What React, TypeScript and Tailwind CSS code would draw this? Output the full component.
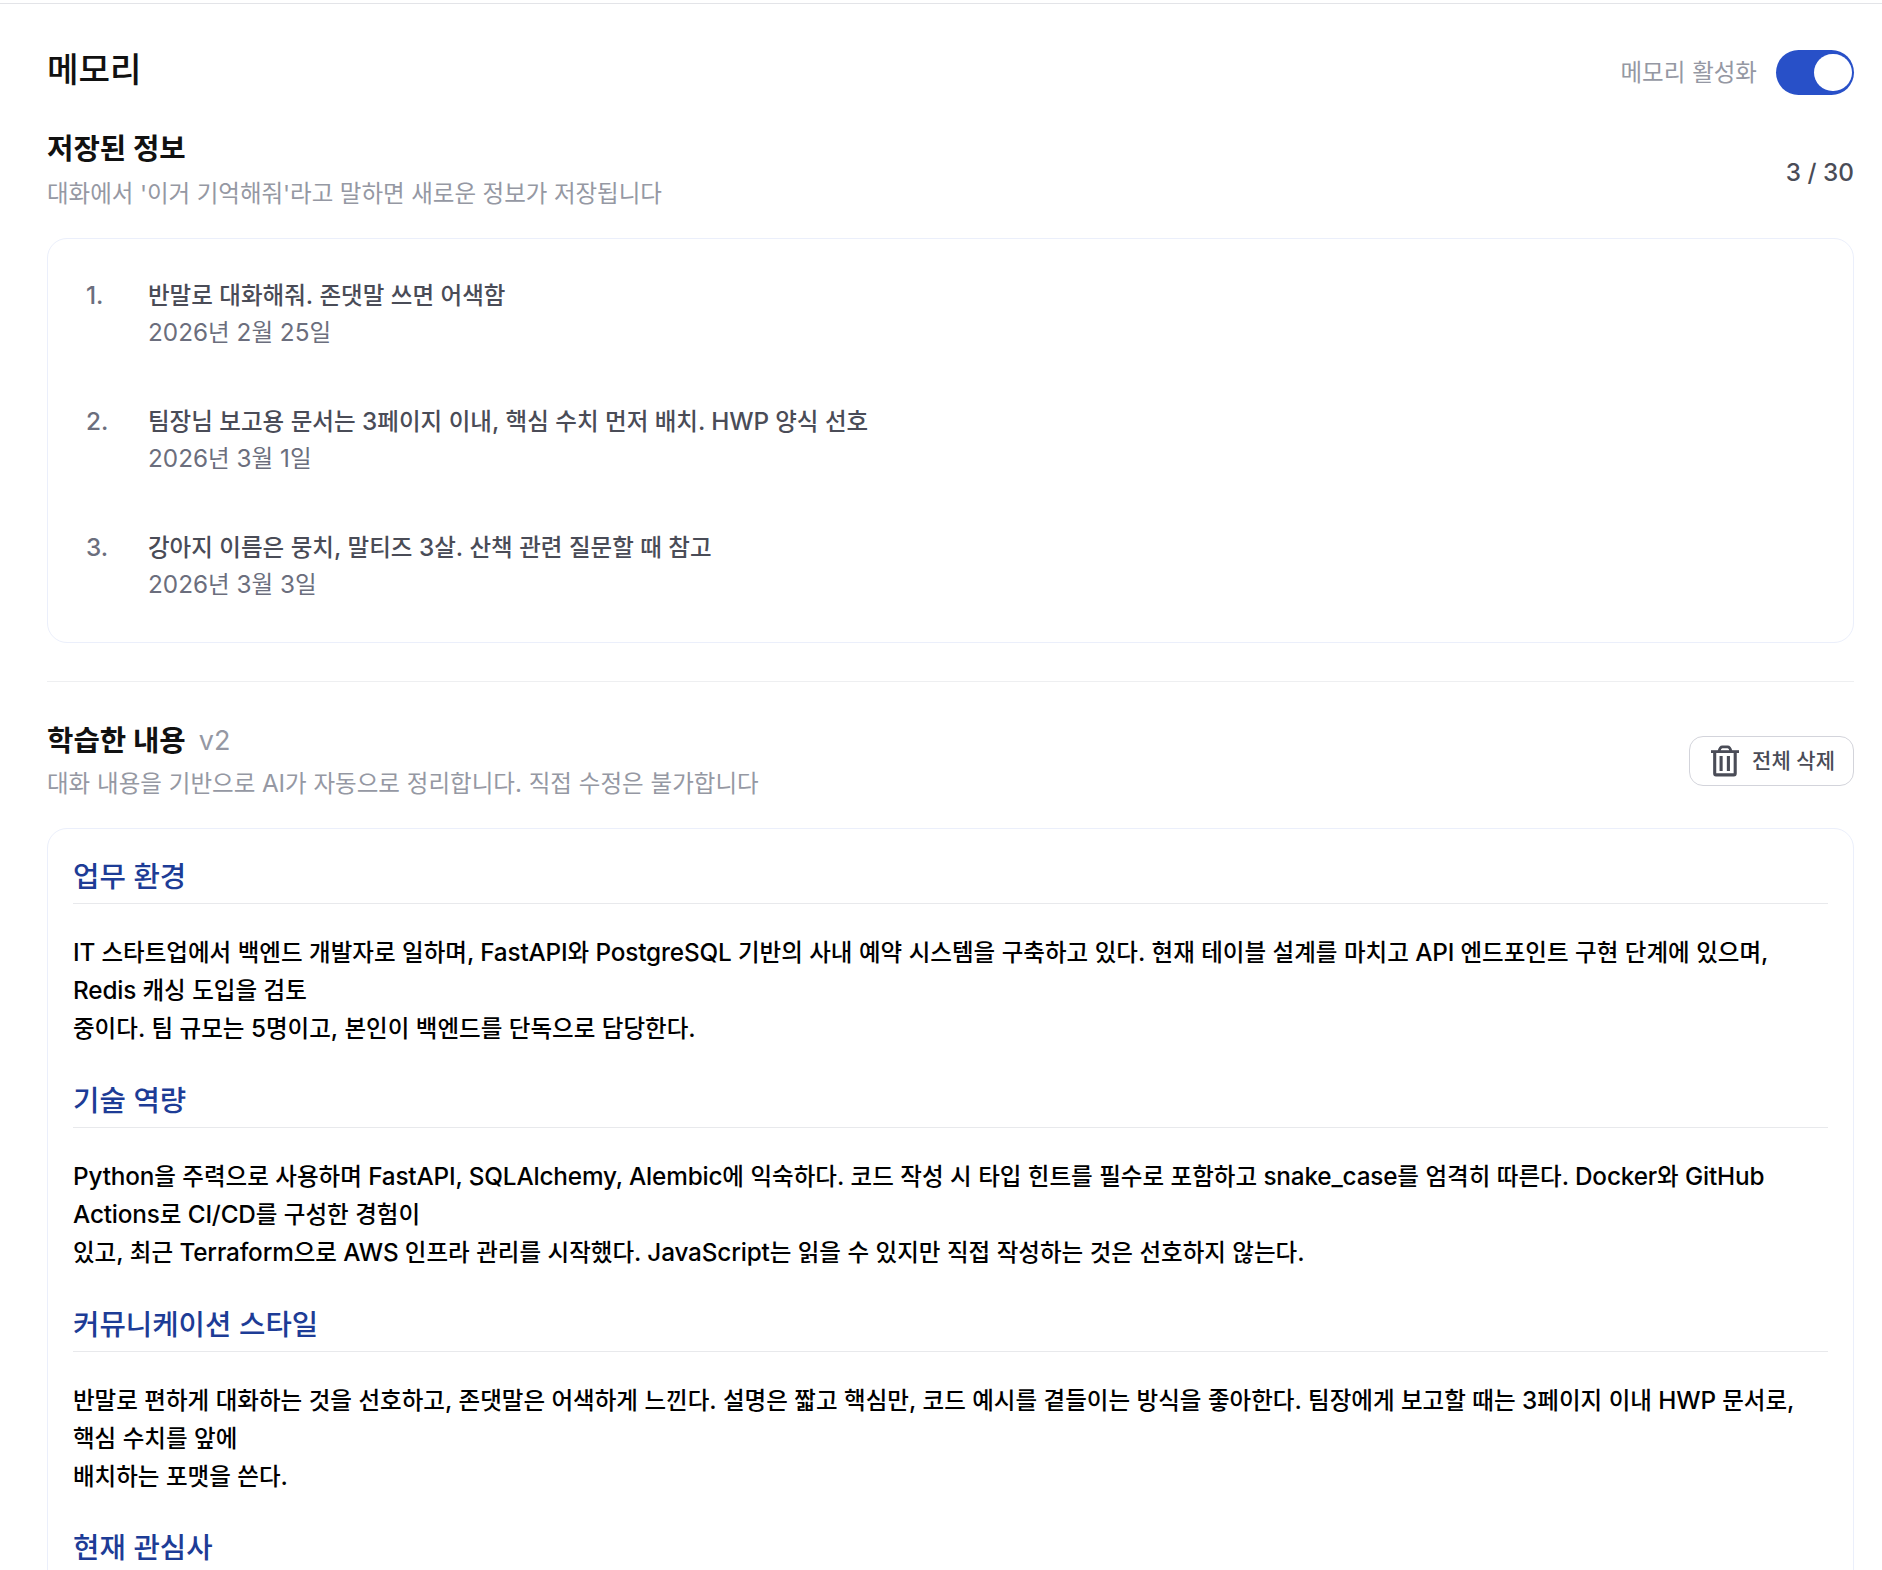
import { useState } from "react";

interface IMemory {
  text: string;
  date: string;
}

interface ISection {
  title: string;
  lines: string[];
}

const memories: IMemory[] = [
  { text: "반말로 대화해줘. 존댓말 쓰면 어색함", date: "2026년 2월 25일" },
  {
    text: "팀장님 보고용 문서는 3페이지 이내, 핵심 수치 먼저 배치. HWP 양식 선호",
    date: "2026년 3월 1일",
  },
  {
    text: "강아지 이름은 뭉치, 말티즈 3살. 산책 관련 질문할 때 참고",
    date: "2026년 3월 3일",
  },
];

const sections: ISection[] = [
  {
    title: "업무 환경",
    lines: [
      "IT 스타트업에서 백엔드 개발자로 일하며, FastAPI와 PostgreSQL 기반의 사내 예약 시스템을 구축하고 있다. 현재 테이블 설계를 마치고 API 엔드포인트 구현 단계에 있으며,",
      "Redis 캐싱 도입을 검토",
      "중이다. 팀 규모는 5명이고, 본인이 백엔드를 단독으로 담당한다.",
    ],
  },
  {
    title: "기술 역량",
    lines: [
      "Python을 주력으로 사용하며 FastAPI, SQLAlchemy, Alembic에 익숙하다. 코드 작성 시 타입 힌트를 필수로 포함하고 snake_case를 엄격히 따른다. Docker와 GitHub",
      "Actions로 CI/CD를 구성한 경험이",
      "있고, 최근 Terraform으로 AWS 인프라 관리를 시작했다. JavaScript는 읽을 수 있지만 직접 작성하는 것은 선호하지 않는다.",
    ],
  },
  {
    title: "커뮤니케이션 스타일",
    lines: [
      "반말로 편하게 대화하는 것을 선호하고, 존댓말은 어색하게 느낀다. 설명은 짧고 핵심만, 코드 예시를 곁들이는 방식을 좋아한다. 팀장에게 보고할 때는 3페이지 이내 HWP 문서로,",
      "핵심 수치를 앞에",
      "배치하는 포맷을 쓴다.",
    ],
  },
  { title: "현재 관심사", lines: [] },
];

// Latin runs are set a little larger so they sit evenly next to Hangul
const Mixed = ({ text }: { text: string }) => (
  <>
    {text.split(/([^가-힣]+)/).map((run, i) =>
      i % 2 ? (
        <span
          key={i}
          className={`text-[1.035em] leading-none ${
            /[A-Za-z]/.test(run) ? "tracking-[-0.16px]" : ""
          }`}
        >
          {run}
        </span>
      ) : (
        run
      )
    )}
  </>
);

const TrashIcon = () => (
  <svg
    className="h-[32px] w-[28px]"
    viewBox="0 0 28 32"
    fill="none"
    stroke="currentColor"
    strokeWidth="3.1"
  >
    <path d="M0 6.6h28" strokeWidth="2.8" />
    <path d="M8 6.4C8.6 3.4 9.6 1.9 11.4 1.9h5.2c1.8 0 2.8 1.5 3.4 4.5" strokeWidth="2.8" />
    <path d="M3.7 7v21.6q0 1.3 1.3 1.3h17.9q1.3 0 1.3-1.3V7" />
    <path d="M10.1 10.9v15M17.4 10.9v15" />
  </svg>
);

const App = () => {
  const [enabled, setEnabled] = useState(true);

  return (
    <div className="h-[1570px] overflow-hidden bg-white pt-[3px] font-['Inter','Noto_Sans_CJK_KR',sans-serif] text-[23.5px]">
      <div className="border-t border-[#e3e4e8] pr-7 pl-[47px]">
        <header className="mt-[46px] flex h-[45px] items-center justify-between">
          <h1 className="pb-[5px] text-[34.3px] font-medium text-[#111]">메모리</h1>
          <div className="flex items-center gap-[19px]">
            <span className="text-[#9598a3]">
              <Mixed text="메모리 활성화" />
            </span>
            <button
              onClick={() => setEnabled(!enabled)}
              className={`flex h-[45px] w-[78px] items-center rounded-full px-[2px] ${
                enabled ? "justify-end bg-[#2850c8]" : "justify-start bg-gray-300"
              }`}
            >
              <span className="h-[37px] w-[38px] rounded-full bg-white" />
            </button>
          </div>
        </header>

        <section className="mt-8">
          <div className="flex items-center justify-between">
            <div>
              <h2 className="text-[28.7px] leading-[44px] font-bold text-[#111]">저장된 정보</h2>
              <p className="leading-[46px] tracking-[-0.03px] text-[#9598a3]">
                대화에서 '이거 기억해줘'라고 말하면 새로운 정보가 저장됩니다
              </p>
            </div>
            <span className="pt-px font-medium text-[#4a4c57]">
              <Mixed text="3 / 30" />
            </span>
          </div>
          <ol className="mt-[21px] flex h-[405px] flex-col gap-[52px] rounded-[20px] border border-[#ebeffb] px-[38px] pt-[38px]">
            {memories.map((memory, i) => (
              <li key={memory.date} className="flex leading-[38px]">
                <span className="w-[62px] font-medium text-[#6b6e7d]">
                  <Mixed text={`${i + 1}.`} />
                </span>
                <div>
                  <p className="font-medium text-[#4a4c57]">
                    <Mixed text={memory.text} />
                  </p>
                  <p className="leading-[36px] text-[#6b6e7d]">
                    <Mixed text={memory.date} />
                  </p>
                </div>
              </li>
            ))}
          </ol>
        </section>

        <section className="mt-[38px] border-t border-[#eeeff1] pt-[37px]">
          <div className="flex items-center justify-between">
            <div>
              <h2 className="text-[28.7px] leading-[44px] font-bold text-[#111]">
                학습한 내용
                <span className="relative -top-px ml-[13px] text-[27px] leading-none font-normal text-[#9598a3]">
                  v2
                </span>
              </h2>
              <p className="leading-[42px] text-[#9598a3]">
                <Mixed text="대화 내용을 기반으로 AI가 자동으로 정리합니다. 직접 수정은 불가합니다" />
              </p>
            </div>
            <button className="mb-[2px] flex h-[50px] w-[165px] items-center justify-between rounded-[14px] border border-[#d3d4db] pr-[18px] pl-[21px] text-[21px] font-medium text-[#4a4c57]">
              <TrashIcon />
              전체 삭제
            </button>
          </div>
          <div className="mt-[23px] h-[900px] rounded-[20px] border border-[#ebeffb] px-[25px] pt-[25px]">
            {sections.map((section) => (
              <div key={section.title} className="mb-[29.75px]">
                <h3 className="border-b border-[#e8e9ec] pb-[3px] text-[28.7px] leading-[46px] font-medium text-[#1d3c96]">
                  {section.title}
                </h3>
                <div className="mt-[30px] leading-[38px] font-medium whitespace-nowrap text-black">
                  {section.lines.map((line) => (
                    <p key={line}>
                      <Mixed text={line} />
                    </p>
                  ))}
                </div>
              </div>
            ))}
          </div>
        </section>
      </div>
    </div>
  );
};

export default App;
